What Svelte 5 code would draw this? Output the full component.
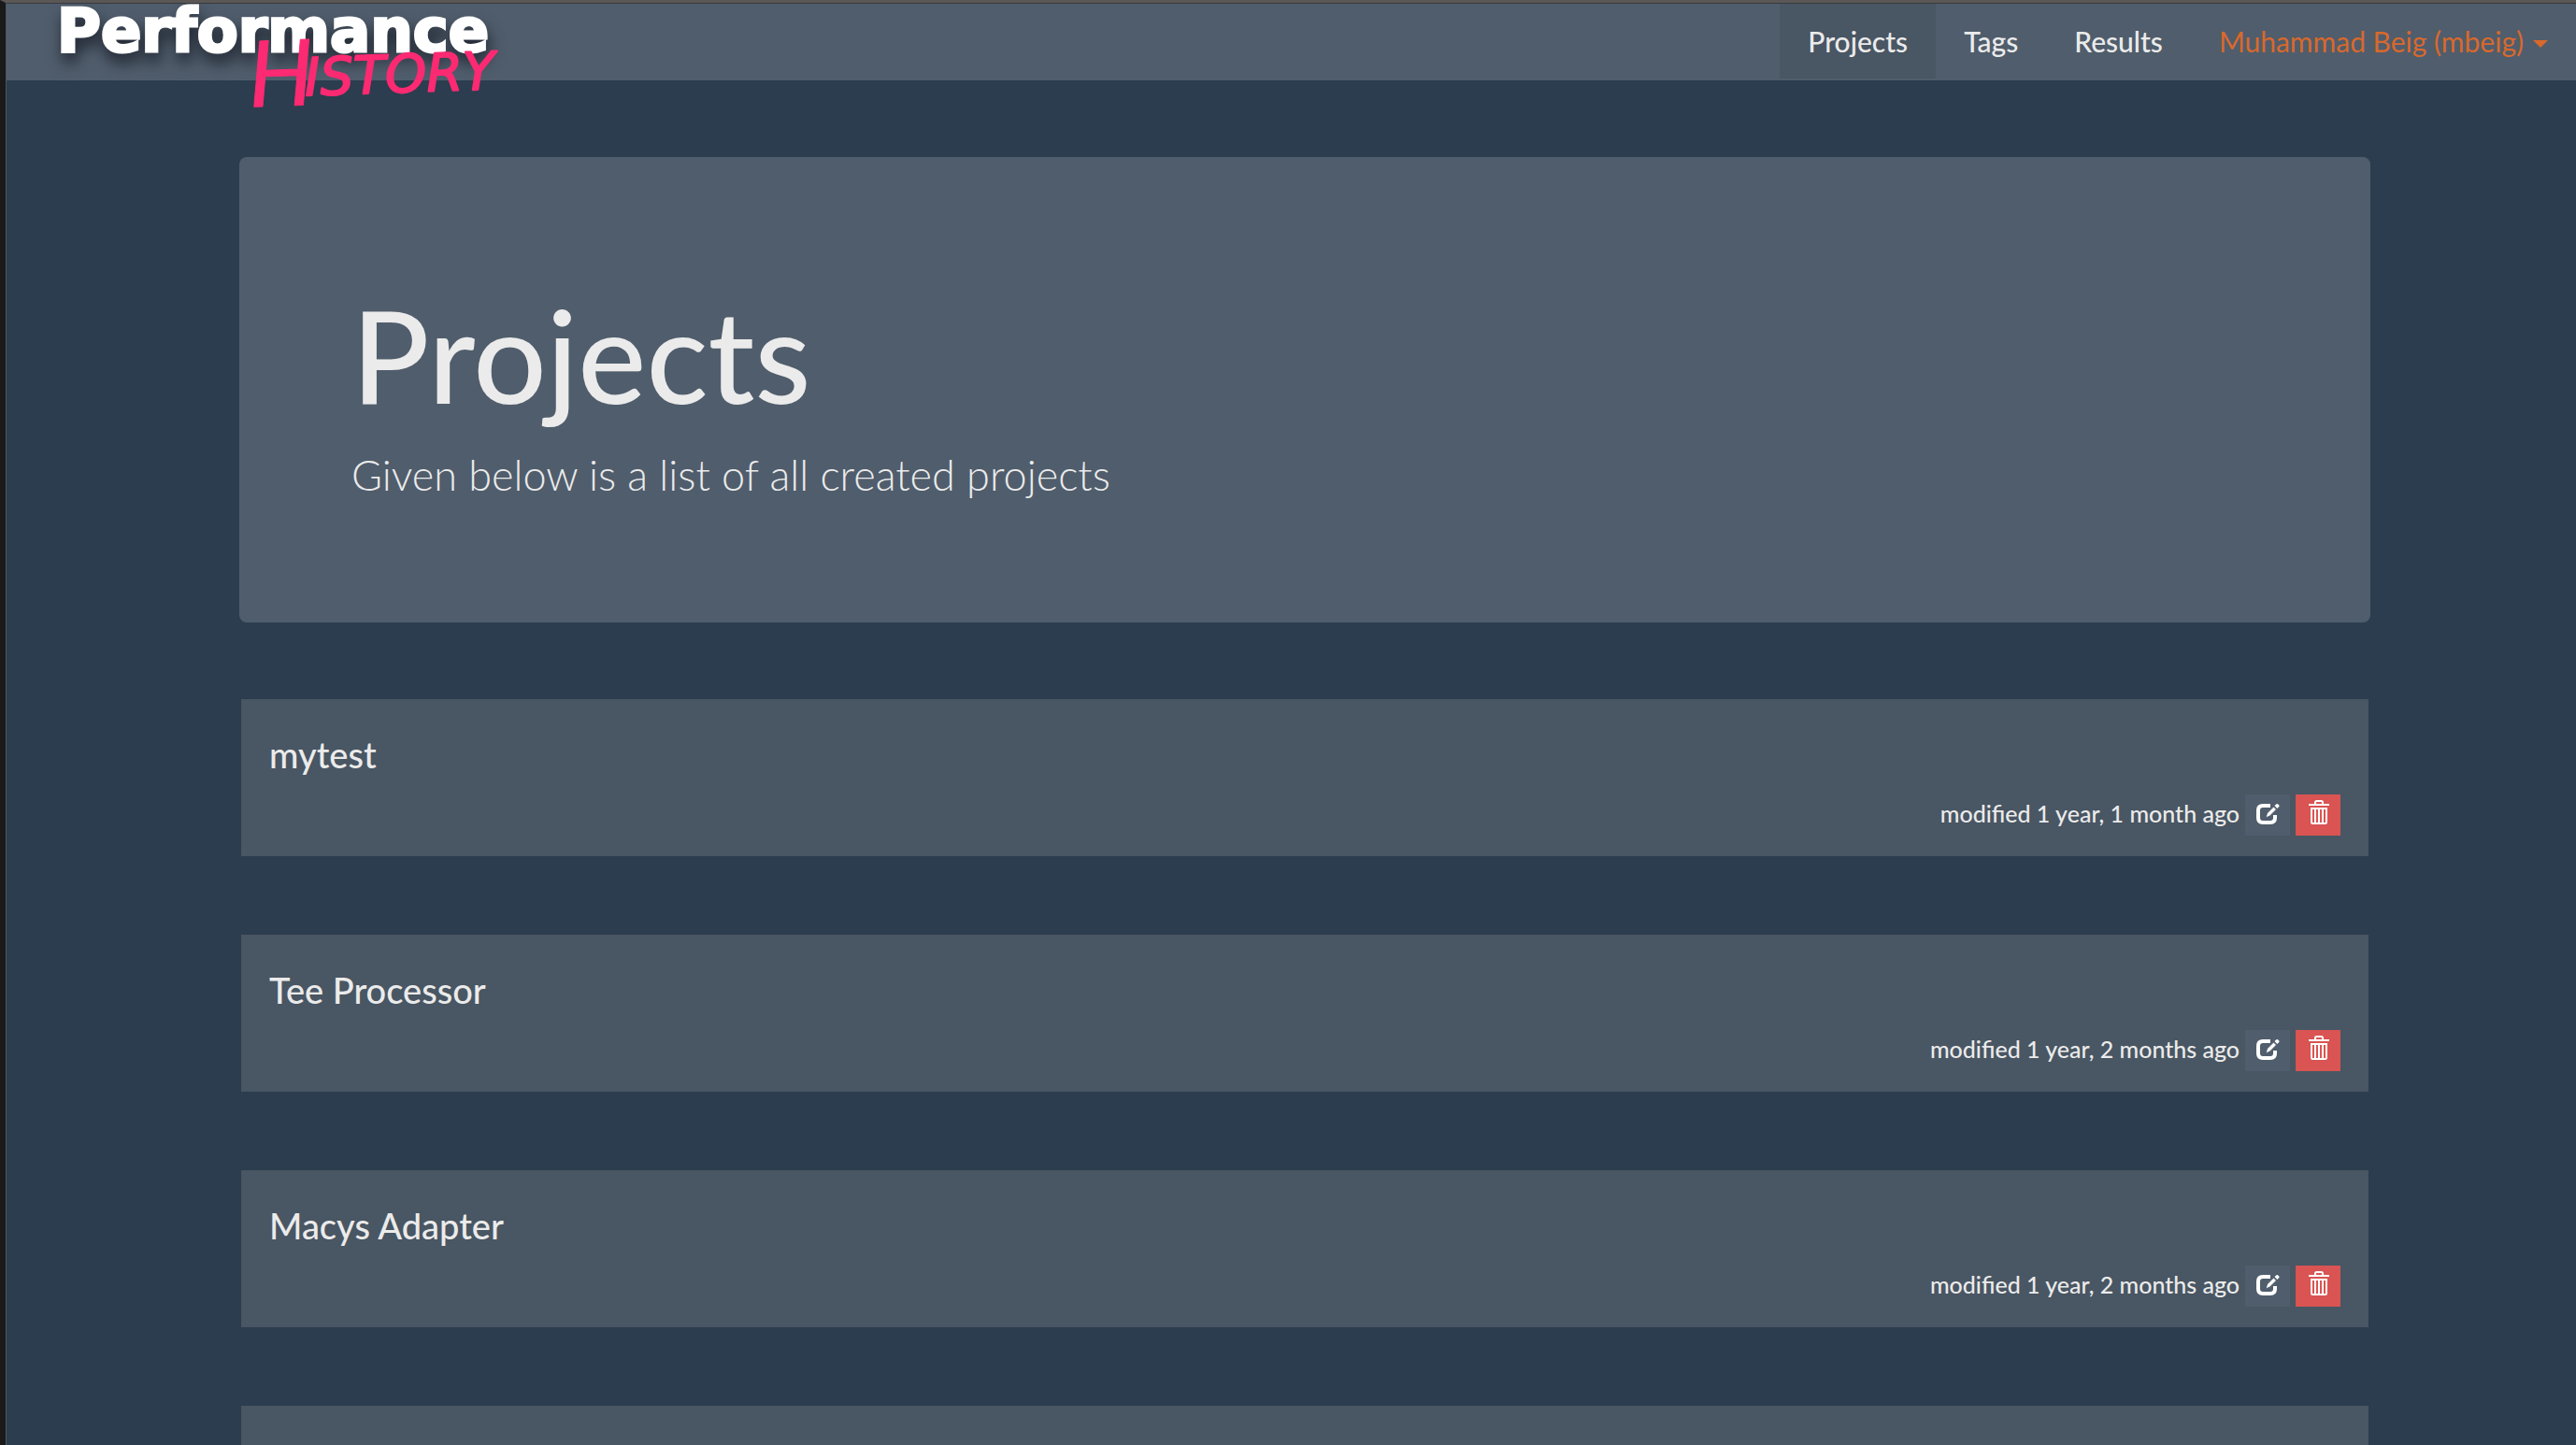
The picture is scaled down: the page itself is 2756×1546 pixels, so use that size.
<script>
  const links = [
    { label: 'Projects', active: true },
    { label: 'Tags', active: false },
    { label: 'Results', active: false }
  ];
  const projects = [
    { name: 'mytest', modified: 'modified 1 year, 1 month ago' },
    { name: 'Tee Processor', modified: 'modified 1 year, 2 months ago' },
    { name: 'Macys Adapter', modified: 'modified 1 year, 2 months ago' },
    null
  ];
</script>

<div class="window">
  <div class="frame">
    <header class="navbar">
      <a class="brand" href="#home" aria-label="Performance History">
        <svg width="520" height="130" viewBox="0 0 520 130">
          <text class="word" x="2" y="51">Performance</text>
          <g class="script" transform="rotate(-2 220 110)">
            <text class="initial" x="208" y="110">H</text>
            <text class="rest" x="268" y="100">ISTORY</text>
          </g>
        </svg>
      </a>
      <nav>
        {#each links as link}
          <a class="nav-link" class:active={link.active} href="#{link.label.toLowerCase()}">{link.label}</a>
        {/each}
        <button class="nav-link user" type="button" aria-haspopup="true">
          Muhammad Beig (mbeig)<span class="caret"></span>
        </button>
      </nav>
    </header>

    <main>
      <section class="hero">
        <h1>Projects</h1>
        <p>Given below is a list of all created projects</p>
      </section>

      <div class="list">
        {#each projects as project}
          <article class="card">
            {#if project}
              <h4>{project.name}</h4>
              <footer>
                <span class="modified">{project.modified}</span>
                <button class="icon-btn" type="button" aria-label="Edit {project.name}">
                  <svg width="28" height="28" viewBox="0 0 28 28">
                    <path d="M17 5H9Q4 5 4 10v8q0 5 5 5h8q5 0 5-5v-3" fill="none" stroke="#fff" stroke-width="4" />
                    <path d="M12 18l1.500-5 7-7 3 3-7 7z" fill="#fff" stroke="#505d6c" stroke-width="1" />
                    <path d="M21.500 5l2-1.800q.800-.600 1.500 0l1.300 1.400q.600.800 0 1.500l-2 1.900z" fill="#fff" />
                  </svg>
                </button>
                <button class="icon-btn danger" type="button" aria-label="Delete {project.name}">
                  <svg width="28" height="28" viewBox="0 0 28 28">
                    <path d="M4 5h22v2H4z" fill="#fff" />
                    <path d="M11 5V3.500q0-1.500 1.500-1.500h5q1.500 0 1.500 1.500V5" fill="none" stroke="#fff" stroke-width="2" />
                    <path d="M7 10v14.500q0 1.500 1.500 1.500h13q1.500 0 1.500-1.500V10z" fill="none" stroke="#fff" stroke-width="2" />
                    <path d="M11 10v16M15 10v16M19 10v16" stroke="#fff" stroke-width="2" />
                  </svg>
                </button>
              </footer>
            {/if}
          </article>
        {/each}
      </div>
    </main>
  </div>
</div>

<style>
  :global(body) {
    margin: 0;
    background: #2b3d4e;
    color: #ebebeb;
    font-family: Lato, "Liberation Sans", sans-serif;
  }
  .window {
    box-sizing: border-box;
    height: 100vh;
    overflow: hidden;
    border-top: 3px solid #5a5756;
    border-left: 6px solid #1a1a1a;
  }
  .frame {
    border-top: 1px solid #383b40;
    border-left: 1px solid #4b5564;
  }
  .navbar {
    position: relative;
    display: flex;
    justify-content: flex-end;
    height: 82px;
    background: #505d6c;
  }
  .brand {
    position: absolute;
    left: 52px;
    top: 0;
  }
  .brand svg {
    display: block;
    overflow: visible;
  }
  .word {
    font: 700 64px "DejaVu Sans", sans-serif;
    fill: #fff;
    stroke: #fff;
    stroke-width: 3px;
    filter: drop-shadow(2px 10px 8px rgba(20, 25, 35, 0.8));
  }
  .script {
    fill: #fc2a72;
    stroke: #fc2a72;
    stroke-linejoin: round;
    font-style: italic;
  }
  .initial {
    font-family: Lato, sans-serif;
    font-size: 98px;
  }
  .rest {
    font-family: "DejaVu Sans", sans-serif;
    font-size: 56px;
    stroke-width: 2px;
  }
  nav {
    display: flex;
    height: 80px;
  }
  .nav-link {
    display: flex;
    align-items: center;
    box-sizing: border-box;
    padding: 0 30px;
    border: 0;
    background: none;
    color: #ebebeb;
    font: 500 30px/42px Lato, sans-serif;
    text-decoration: none;
    cursor: pointer;
  }
  .nav-link.active {
    background: #495663;
  }
  .nav-link.user {
    color: #d8692c;
    font-weight: 400;
  }
  .caret {
    margin: 6px 0 0 10px;
    border: 8px solid transparent;
    border-top-color: #d8692c;
    border-bottom: 0;
  }
  main {
    margin: 82px 220px 0 249px;
  }
  .hero {
    padding: 136px 120px 126px;
    border-radius: 8px;
    background: #505d6c;
  }
  h1 {
    margin: 0 0 22px;
    font-size: 138px;
    line-height: 150px;
    font-weight: 500;
  }
  .hero p {
    margin: 0;
    font-size: 45px;
    line-height: 64px;
    font-weight: 300;
  }
  .list {
    display: grid;
    gap: 84px;
    padding: 82px 2px 0;
  }
  .card {
    box-sizing: border-box;
    min-height: 168px;
    padding: 38px 30px 22px;
    background: #495663;
  }
  h4 {
    margin: 0 0 22px;
    font-size: 38px;
    line-height: 42px;
    font-weight: 500;
  }
  footer {
    display: flex;
    justify-content: flex-end;
    align-items: flex-start;
    gap: 6px;
  }
  .modified {
    font-size: 25px;
    line-height: 40px;
    font-weight: 500;
  }
  .icon-btn {
    display: flex;
    align-items: flex-start;
    justify-content: center;
    width: 48px;
    height: 44px;
    padding: 7px 0 0;
    border: 0;
    background: #505d6c;
    cursor: pointer;
  }
  .icon-btn.danger {
    padding-top: 5px;
    background: #d95452;
  }
</style>
